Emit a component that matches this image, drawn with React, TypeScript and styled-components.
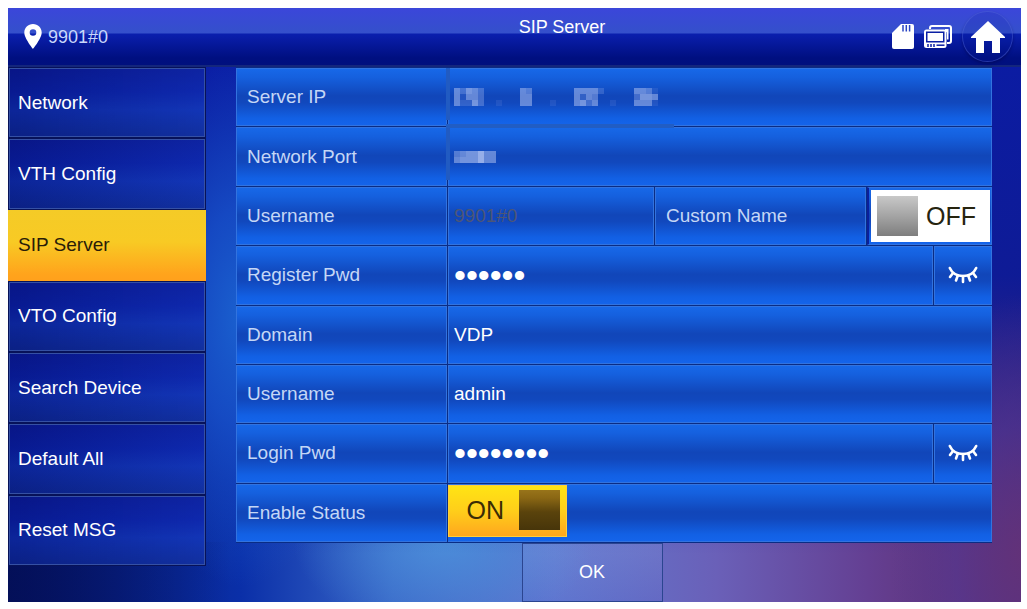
import React, { useState } from 'react';
import styled, { createGlobalStyle, css } from 'styled-components';

const GlobalStyle = createGlobalStyle`
  *, *::before, *::after { box-sizing: border-box; }
  body {
    margin: 0;
    background: #fff;
    font-family: "Liberation Sans", Arial, Helvetica, sans-serif;
  }
  button, input { font: inherit; color: inherit; }
`;

const Page = styled.div`
  padding: 8px 6px 7px 8px;
`;

const Screen = styled.div`
  color: #fff;
  background:
    linear-gradient(to right, rgba(3, 14, 84, 0.8) 0%, rgba(3, 14, 84, 0) 22%) bottom / 100% 60px no-repeat,
    radial-gradient(ellipse 120px 270px at 23% 52%, #1a60cf 0%, rgba(24, 84, 204, 0.8) 40%, rgba(16, 52, 190, 0) 100%),
    radial-gradient(ellipse 130px 260px at 100% 92%, rgba(98, 50, 122, 0.95) 0%, rgba(84, 56, 150, 0.6) 50%, rgba(60, 50, 160, 0) 100%),
    linear-gradient(to bottom, #0a1ca6 0%, rgba(10, 26, 152, 0.95) 45%, rgba(10, 30, 160, 0) 92%),
    radial-gradient(ellipse 150px 90px at 43% 90%, rgba(76, 146, 220, 0.85) 0%, rgba(76, 146, 220, 0) 100%),
    linear-gradient(to right, #06156a 0%, #0a2fa8 23%, #3a68c8 38%, #6078cf 54%, #6a60b8 70%, #643f92 85%, #5c2a64 100%);
`;

const Header = styled.header`
  display: flex;
  height: 59px;
  border-bottom: 2px solid #14267c;
  background: linear-gradient(to bottom, #3b46da 0, #3450cb 25px, #0a1fae 26px, #000f80 50px, #00107e 100%);
`;

const Location = styled.div`
  display: flex;
  align-items: center;
  gap: 6px;
  width: 224px;
  padding-left: 16px;
  font-size: 18px;
  line-height: 20px;
  color: #c9d8fa;
`;

const Title = styled.h1`
  flex: 1;
  margin: 0;
  padding-top: 9px;
  font-size: 18px;
  line-height: 20px;
  font-weight: 400;
  text-align: center;
`;

const Tray = styled.div`
  display: flex;
  align-items: center;
  gap: 10px;
  padding-right: 8px;
`;

const HomeButton = styled.button`
  display: grid;
  place-items: center;
  width: 51px;
  height: 51px;
  padding: 0;
  border: 1px solid rgba(90, 110, 220, 0.4);
  border-radius: 50%;
  background: rgba(10, 30, 150, 0.15);
  box-shadow: 0 2px 3px rgba(0, 5, 70, 0.4);
`;

const Body = styled.div`
  display: flex;
  align-items: flex-start;
`;

const Sidebar = styled.nav`
  display: grid;
  grid-auto-rows: 1fr;
  width: 198px;
  min-height: 499px;
`;

const NavItem = styled.button<{ $active?: boolean }>`
  padding: 0 10px;
  border: 0;
  outline: 1px solid #071259;
  outline-offset: -1px;
  font-size: 19px;
  line-height: 22px;
  text-align: left;
  box-shadow: inset 0 0 0 2px #3550a4;
  background:
    linear-gradient(to right, rgba(0, 10, 100, 0.35), rgba(20, 60, 190, 0.25)),
    linear-gradient(to bottom, #0c1b98 0%, #0c22a8 35%, #1233b4 60%, #102b92 100%);
  ${p => p.$active && css`
    color: #2a1c08;
    outline: 0;
    box-shadow: none;
    background: linear-gradient(to bottom, #f4cb27 0%, #f8ca24 45%, #ffa41c 90%, #ffa01c 100%);
  `}
`;

const Main = styled.main`
  flex: 1;
  margin: 0 29px 0 30px;
`;

const Rows = styled.div`
  display: grid;
  grid-auto-rows: 1fr;
  gap: 1px;
  min-height: 476px;
  padding: 1px 0;
  background: #0a2c84;
`;

const rowColumns = {
  plain: '211px 1fr',
  secret: '211px 1fr 58px',
  split: '211px 1fr 211px 125px',
};

const Row = styled.div<{ $kind?: keyof typeof rowColumns }>`
  display: grid;
  grid-template-columns: ${p => rowColumns[p.$kind ?? 'plain']};
  column-gap: 1px;
  position: relative;
`;

const cell = css`
  display: flex;
  align-items: center;
  min-width: 0;
  border: 1px solid #3273df;
  background: linear-gradient(to bottom, #1768e8 0%, #1560de 15%, #1146b9 48%, #1148bd 60%, #1260e4 88%, #1464ea 100%);
`;

const LabelCell = styled.label`
  ${cell}
  padding-left: 10px;
  font-size: 19px;
  line-height: 22px;
  color: #c4d7f6;
`;

const ValueCell = styled.div`
  ${cell}
  padding-left: 5px;
`;

const ToggleCell = styled.div<{ $align?: 'end' }>`
  ${cell}
  align-items: flex-start;
  border-left: 0;
  ${p => p.$align === 'end' && css`
    align-items: center;
    justify-content: flex-end;
    padding-right: 1px;
    border-left: 2px solid #0a1f9c;
  `}
`;

const Field = styled.input<{ $dim?: boolean }>`
  flex: 1;
  min-width: 0;
  height: 30px;
  padding: 0;
  border: 0;
  outline: 0;
  background: none;
  font-size: 19px;
  color: ${p => (p.$dim ? '#4c5676' : '#fff')};
  &[type='password'] { font-size: 34px; }
`;

const EyeButton = styled.button`
  ${cell}
  justify-content: center;
  padding: 0;
`;

const Smudge = styled.span`
  position: absolute;
  left: 210px;
  bottom: -2px;
  width: 228px;
  height: 4px;
  background: #215dc4;
  z-index: 1;
`;

const SmudgeEdge = styled.span`
  position: absolute;
  left: 210px;
  top: 0;
  bottom: 6px;
  width: 4px;
  background: #215bc2;
`;

const Switch = styled.label<{ $on: boolean }>`
  display: flex;
  align-items: center;
  gap: 8px;
  position: relative;
  width: 119px;
  height: 52px;
  padding: 0 6px;
  font-size: 25px;
  line-height: 28px;
  ${p => (p.$on ? css`
    flex-direction: row-reverse;
    padding-bottom: 1px;
    gap: 15px;
    color: #3a2c05;
    border: 1px solid #ffcf3a;
    background: linear-gradient(to bottom, #ffe414 0%, #ffce1a 50%, #ffa71e 100%);
  ` : css`
    color: #26240f;
    background: #fff;
  `)}
  input {
    position: absolute;
    inset: 0;
    margin: 0;
    opacity: 0;
  }
`;

const Knob = styled.span<{ $on: boolean }>`
  width: 41px;
  height: 40px;
  background: ${p => (p.$on
    ? 'linear-gradient(to bottom, #98741a 0%, #8a6714 20%, #5a430c 55%, #47350a 100%)'
    : 'linear-gradient(to bottom, #c8c8c8 0%, #a4a4a4 50%, #7e7e7e 100%)')};
`;

const Actions = styled.div`
  display: flex;
  justify-content: center;
  padding-right: 44px;
`;

const OkButton = styled.button`
  width: 141px;
  height: 59px;
  padding: 0 0 2px;
  border: 1px solid #2b4590;
  background: linear-gradient(to bottom, rgba(130, 150, 220, 0.28), rgba(90, 110, 210, 0.2));
  font-size: 18px;
  line-height: 20px;
`;

const PinIcon = () => (
  <svg width="18" height="25" viewBox="0 0 18 25" aria-hidden="true">
    <path fill="#fff" fillRule="evenodd" d="M9 0C4 0 .3 3.800 .3 8.600 .3 14.500 9 25 9 25s8.700-10.500 8.700-16.400C17.700 3.800 14 0 9 0Zm0 5.200a3.300 3.300 0 1 1 0 6.600 3.300 3.300 0 0 1 0-6.600Z" />
  </svg>
);

const SdCardIcon = () => (
  <svg width="22" height="25" viewBox="0 0 22 25" role="img" aria-label="SD card">
    <path fill="#fff" d="M9 0h11a2 2 0 0 1 2 2v21a2 2 0 0 1-2 2H2a2 2 0 0 1-2-2V9Z" />
    <path stroke="#2a45c4" strokeWidth="1.500" d="M11 1v6.500M14.300 1v6.500M17.600 1v6.500" />
  </svg>
);

const MonitorsIcon = () => (
  <svg width="28" height="23" viewBox="0 0 28 23" role="img" aria-label="Monitors" fill="none">
    <path stroke="#fff" strokeWidth="2" d="M6 4V3a2 2 0 0 1 2-2h17a2 2 0 0 1 2 2v13a2 2 0 0 1-2 2h-2" />
    <path fill="#fff" d="M21 7V4h3.500v10.500H23V7Z" />
    <rect x="0" y="4.500" width="22.500" height="18.500" rx="2.500" fill="#fff" />
    <rect x="2" y="6.500" width="18.500" height="11" fill="#0b20a4" />
    <rect x="3.500" y="8" width="15.500" height="8" fill="#fff" />
    <path stroke="#0b20a4" strokeWidth="1.500" d="M4 19v3M7 19v3M10 19v3" />
    <path stroke="#0b20a4" strokeWidth="1.500" d="M12.500 20.200h8" />
  </svg>
);

const HouseIcon = () => (
  <svg width="34" height="32" viewBox="0 0 34 32" aria-hidden="true">
    <path fill="#fff" d="M17 0 34 16v1h-5v15h-8V20h-8v12H5V17H0v-1Z" />
  </svg>
);

const ClosedEyeIcon = () => (
  <svg width="30" height="18" viewBox="0 0 30 18" aria-hidden="true" fill="none" stroke="#fff" strokeWidth="2.600" strokeLinecap="round">
    <path d="M1.800 2C4 7 9 10 15 10S26 7 28.200 2" />
    <path d="M5 7 2 11M9.800 9.500 8 14.500M15 10v6M20.200 9.500l1.800 5M25 7l3 4" />
  </svg>
);

// Each digit of a row is the opacity of one 6px tile, in tenths.
const Mosaic = ({ tiles, label }: { tiles: string[]; label: string }) => (
  <svg
    width={tiles[0].length * 6}
    height={tiles.length * 6}
    role="img"
    aria-label={label}
    shapeRendering="crispEdges"
  >
    {tiles.flatMap((line, y) =>
      [...line].map((value, x) =>
        value === '0' ? null : (
          <rect key={`${x}-${y}`} x={x * 6} y={y * 6} width="6" height="6" fill="#b8c8f4" opacity={Number(value) / 10} />
        ),
      ),
    )}
  </svg>
);

const IP_TILES = [
  '5365300000054000000055552000005541',
  '5155300000055000000052540000003665',
  '5226300100055000100056350010005551',
];
const PORT_TILES = ['4566855', '5666855'];

type SwitchProps = { id: string; on: boolean; onChange: (on: boolean) => void };

const Toggle = ({ id, on, onChange }: SwitchProps) => (
  <Switch $on={on}>
    <input id={id} type="checkbox" role="switch" checked={on} onChange={e => onChange(e.target.checked)} />
    <Knob $on={on} />
    {on ? 'ON' : 'OFF'}
  </Switch>
);

const SecretRow = ({ id, label, value }: { id: string; label: string; value: string }) => {
  const [shown, setShown] = useState(false);
  return (
    <Row $kind="secret">
      <LabelCell htmlFor={id}>{label}</LabelCell>
      <ValueCell>
        <Field id={id} type={shown ? 'text' : 'password'} defaultValue={value} />
      </ValueCell>
      <EyeButton type="button" aria-label={`Show ${label}`} onClick={() => setShown(!shown)}>
        <ClosedEyeIcon />
      </EyeButton>
    </Row>
  );
};

const MENU = ['Network', 'VTH Config', 'SIP Server', 'VTO Config', 'Search Device', 'Default All', 'Reset MSG'];

export default function App() {
  const [page, setPage] = useState('SIP Server');
  const [custom, setCustom] = useState(false);
  const [enabled, setEnabled] = useState(true);

  return (
    <Page>
      <GlobalStyle />
      <Screen>
        <Header>
          <Location>
            <PinIcon />
            9901#0
          </Location>
          <Title>{page}</Title>
          <Tray>
            <SdCardIcon />
            <MonitorsIcon />
            <HomeButton type="button" aria-label="Home">
              <HouseIcon />
            </HomeButton>
          </Tray>
        </Header>
        <Body>
          <Sidebar>
            {MENU.map(item => (
              <NavItem key={item} type="button" $active={item === page} onClick={() => setPage(item)}>
                {item}
              </NavItem>
            ))}
          </Sidebar>
          <Main>
            <Rows>
              <Row>
                <LabelCell as="div">Server IP</LabelCell>
                <ValueCell>
                  <Mosaic tiles={IP_TILES} label="Hidden address" />
                </ValueCell>
                <SmudgeEdge />
                <Smudge />
              </Row>
              <Row>
                <LabelCell as="div">Network Port</LabelCell>
                <ValueCell>
                  <Mosaic tiles={PORT_TILES} label="Hidden port" />
                </ValueCell>
                <SmudgeEdge />
              </Row>
              <Row $kind="split">
                <LabelCell htmlFor="sip-user">Username</LabelCell>
                <ValueCell>
                  <Field id="sip-user" $dim defaultValue="9901#0" readOnly />
                </ValueCell>
                <LabelCell htmlFor="custom-name">Custom Name</LabelCell>
                <ToggleCell $align="end">
                  <Toggle id="custom-name" on={custom} onChange={setCustom} />
                </ToggleCell>
              </Row>
              <SecretRow id="register-pwd" label="Register Pwd" value="123456" />
              <Row>
                <LabelCell htmlFor="domain">Domain</LabelCell>
                <ValueCell>
                  <Field id="domain" defaultValue="VDP" />
                </ValueCell>
              </Row>
              <Row>
                <LabelCell htmlFor="login-user">Username</LabelCell>
                <ValueCell>
                  <Field id="login-user" defaultValue="admin" />
                </ValueCell>
              </Row>
              <SecretRow id="login-pwd" label="Login Pwd" value="admin123" />
              <Row>
                <LabelCell htmlFor="enable-status">Enable Status</LabelCell>
                <ToggleCell>
                  <Toggle id="enable-status" on={enabled} onChange={setEnabled} />
                </ToggleCell>
              </Row>
            </Rows>
            <Actions>
              <OkButton type="button">OK</OkButton>
            </Actions>
          </Main>
        </Body>
      </Screen>
    </Page>
  );
}
